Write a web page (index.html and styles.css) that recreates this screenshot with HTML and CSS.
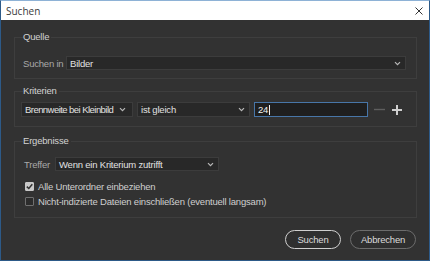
FILE: index.html
```html
<!DOCTYPE html>
<html lang="de">
  <head>
    <meta charset="utf-8" />
    <title>Suchen</title>
    <link rel="stylesheet" href="styles.css">
  </head>
  <body>
    <div class="window">
      <div class="titlebar">
        <span class="title">Suchen</span>
        <svg class="close" width="8" height="8" viewBox="0 0 8 8">
          <path d="M0.5 0.5L7.5 7.5M7.5 0.5L0.5 7.5" stroke="#333" stroke-width="1" fill="none" />
        </svg>
      </div>

      <div class="dialog">
        <fieldset class="group group-source">
          <legend>Quelle</legend>
          <div class="row">
            <span class="label label-source">Suchen in</span>
            <div class="select select-source">
              <span>Bilder</span>
              <svg class="chevron" width="7" height="5" viewBox="0 0 7 5"><path d="M1 1.2L3.5 3.7L6 1.2" /></svg>
            </div>
          </div>
        </fieldset>

        <fieldset class="group group-criteria">
          <legend>Kriterien</legend>
          <div class="row criteria-row">
            <div class="select select-field">
              <span class="tight">Brennweite bei Kleinbild</span>
              <svg class="chevron" width="7" height="5" viewBox="0 0 7 5"><path d="M1 1.2L3.5 3.7L6 1.2" /></svg>
            </div>
            <div class="select select-op">
              <span>ist gleich</span>
              <svg class="chevron" width="7" height="5" viewBox="0 0 7 5"><path d="M1 1.2L3.5 3.7L6 1.2" /></svg>
            </div>
            <div class="input">24<span class="caret"></span></div>
            <svg class="icon-btn minus" width="11" height="11" viewBox="0 0 11 11"><path d="M0 5.5H11" /></svg>
            <svg class="icon-btn plus" width="10" height="10" viewBox="0 0 10 10"><path d="M0 5H10M5 0V10" /></svg>
          </div>
        </fieldset>

        <fieldset class="group group-results">
          <legend>Ergebnisse</legend>
          <div class="row">
            <span class="label label-results">Treffer</span>
            <div class="select select-match">
              <span>Wenn ein Kriterium zutrifft</span>
              <svg class="chevron" width="7" height="5" viewBox="0 0 7 5"><path d="M1 1.2L3.5 3.7L6 1.2" /></svg>
            </div>
          </div>
          <div class="check-row first">
            <span class="checkbox checked">
              <svg width="9" height="9" viewBox="0 0 9 9"><path d="M1.8 4.6L3.8 6.5L7.3 2.3" /></svg>
            </span>
            <span class="check-label">Alle Unterordner einbeziehen</span>
          </div>
          <div class="check-row">
            <span class="checkbox"></span>
            <span class="check-label">Nicht-indizierte Dateien einschließen (eventuell langsam)</span>
          </div>
        </fieldset>

        <div class="actions">
          <button class="btn btn-default">Suchen</button>
          <button class="btn">Abbrechen</button>
        </div>
      </div>
    </div>
  </body>
</html>
```

FILE: styles.css
```css
* {
  margin: 0;
  padding: 0;
  box-sizing: border-box;
}
body {
  background-color: #323232;
  font-family: "Liberation Sans", Arial, sans-serif;
  font-size: 9.5px;
  letter-spacing: -0.2px;
  color: #c4c4c4;
  white-space: nowrap;
}
.window {
  width: 430px;
  height: 261px;
  background-color: #323232;
  border: 1px solid #2d5a88;
  border-top-color: #8eb2d6;
  display: flex;
  flex-direction: column;
}
.titlebar {
  height: 19px;
  flex-shrink: 0;
  background-color: #ffffff;
  display: flex;
  align-items: center;
  justify-content: space-between;
  padding: 0 6px 0 5px;
}
.title {
  font-family: "Open Sans", "Noto Sans", sans-serif;
  font-size: 10px;
  letter-spacing: 0;
  color: #3a3a3a;
}
.close {
  margin-top: 1px;
}

.dialog {
  flex: 1;
  padding: 0 12px 0 13px;
  display: flex;
  flex-direction: column;
}

/* groups */
.group {
  border: 1px solid #3e3e3e;
  padding: 0 8px;
}
.group legend {
  line-height: 12px;
  color: #d2d2d2;
  padding: 0 2px 0 0;
}
.group-source {
  margin-top: 11px;
  padding-top: 13px;
  padding-bottom: 8px;
}
.group-criteria {
  margin-top: 6px;
  padding: 5px 6px 9px;
}
.group-criteria legend {
  margin-left: 2px;
}
.group-results {
  margin-top: 8px;
  padding: 10px 9px 8px;
}
.group-results legend {
  margin-left: -1px;
}

.row {
  display: flex;
  align-items: center;
}
.row > * {
  flex-shrink: 0;
}
.label {
  color: #a9a9a9;
}
.label-source {
  width: 43px;
}
.label-results {
  width: 31px;
}

/* dropdowns */
.select {
  height: 14px;
  background-color: #282828;
  border: 1px solid #3c3c3c;
  display: flex;
  align-items: center;
  justify-content: space-between;
  padding: 0 4px 0 3px;
  color: #e2e2e2;
}
.select .tight {
  letter-spacing: -0.55px;
}
.chevron path {
  fill: none;
  stroke: #b8b8b8;
  stroke-width: 1.2;
}
.select-source {
  width: 340px;
}
.select-match {
  width: 164px;
}
.select-field {
  width: 112px;
  padding-right: 6px;
}
.select-op {
  width: 113px;
  margin-left: 4px;
}

.criteria-row {
  height: 15px;
}
.criteria-row .select {
  height: 15px;
}
.input {
  width: 114px;
  height: 15px;
  margin-left: 4px;
  background-color: #1f1f1f;
  border: 1px solid #4876a8;
  color: #f2f2f2;
  padding-left: 3px;
  display: flex;
  align-items: center;
}
.caret {
  width: 1px;
  height: 10px;
  background-color: #f2f2f2;
  margin-left: 1px;
}
.icon-btn path {
  fill: none;
}
.minus {
  margin-left: 6px;
}
.minus path {
  stroke: #5e5e5e;
  stroke-width: 1.4;
}
.plus {
  margin-left: 7px;
}
.plus path {
  stroke: #d0d0d0;
  stroke-width: 2;
}

/* checkboxes */
.check-row {
  height: 15px;
  display: flex;
  align-items: center;
}
.check-row.first {
  margin-top: 8px;
}
.checkbox {
  width: 9px;
  height: 9px;
  flex-shrink: 0;
  margin-left: 1px;
  margin-right: 4px;
  border: 1px solid #707070;
  background-color: #2c2c2c;
  border-radius: 1px;
  display: flex;
}
.checkbox.checked {
  background-color: #c8c8c8;
  border-color: #c8c8c8;
}
.checkbox svg {
  margin: -1px;
}
.checkbox path {
  fill: none;
  stroke: #303030;
  stroke-width: 1.5;
}
.check-label {
  color: #cfcfcf;
}

/* buttons */
.actions {
  margin-top: 12px;
  margin-right: 1px;
  display: flex;
  justify-content: flex-end;
  gap: 9px;
}
.btn {
  height: 19px;
  border-radius: 10px;
  border: 1px solid #6c6c6c;
  background-color: #2f2f2f;
  color: #dcdcdc;
  font-family: inherit;
  font-size: 9.5px;
  letter-spacing: -0.2px;
  width: 66px;
}
.btn-default {
  width: 56px;
  border: 1.5px solid #cfcfcf;
}
```
